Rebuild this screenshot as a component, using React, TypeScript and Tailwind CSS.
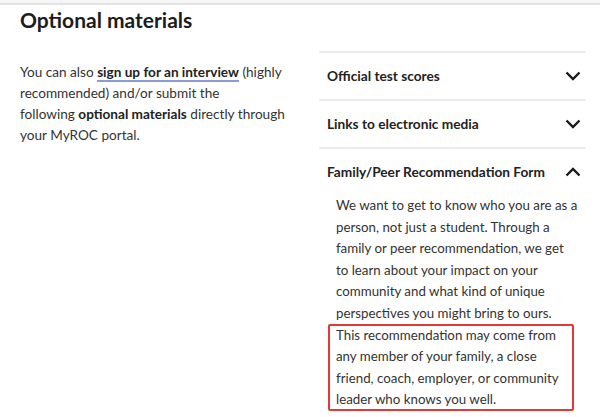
import React from "react";

const font = { fontFamily: "Lato, 'Open Sans', Arial, sans-serif" };

function Chevron({ up }: { up?: boolean }) {
  return (
    <svg width="16" height="10" viewBox="0 0 16 10" aria-hidden className="shrink-0">
      <polyline
        points={up ? "1.5,8.5 8,2 14.5,8.5" : "1.5,1.5 8,8 14.5,1.5"}
        fill="none"
        stroke="#1a1a1a"
        strokeWidth="2.4"
      />
    </svg>
  );
}

function AccordionHeader({ title, open }: { title: string; open?: boolean }) {
  return (
    <div className="border-t-2 border-[#ececec]">
      <button
        type="button"
        className="flex h-[46px] w-full items-center justify-between pl-2 pr-[5px] text-left text-[13.7px] font-bold text-[#222]"
      >
        <span>{title}</span>
        <Chevron up={open} />
      </button>
    </div>
  );
}

// line breaks follow the original column width
const intro = [
  "We want to get to know who you are as a",
  "person, not just a student. Through a",
  "family or peer recommendation, we get",
  "to learn about your impact on your",
  "community and what kind of unique",
  "perspectives you might bring to ours.",
];
const note = [
  "This recommendation may come from",
  "any member of your family, a close",
  "friend, coach, employer, or community",
  "leader who knows you well.",
];

export default function App() {
  return (
    <div className="min-h-[417px] w-[600px] bg-white" style={font}>
      <div className="h-[5px] border-b-2 border-[#e3e3e3] bg-[#f6f6f6]" />
      <h2 className="px-5 pt-[2px] text-[21px] font-bold leading-[26px] text-[#1c1c1c]">
        Optional materials
      </h2>

      <div className="mt-[18px] flex">
        <div className="w-[319px] shrink-0 pl-5 pr-4 pt-[11px]">
          <p className="text-[13.6px] leading-[21px] text-[#333]">
            You can also{" "}
            <a className="border-b-2 border-[#8b9bd8] font-bold text-[#222]">sign up for an interview</a>{" "}
            (highly
            <br />
            recommended) and/or submit the
            <br />
            following <strong className="font-bold text-[#222]">optional materials</strong> directly through
            <br />
            your MyROC portal.
          </p>
        </div>

        <div className="w-[267px] shrink-0">
          <AccordionHeader title="Official test scores" />
          <AccordionHeader title="Links to electronic media" />
          <AccordionHeader title="Family/Peer Recommendation Form" open />
          <div className="pl-[17px] text-[13.3px] leading-[21.6px] text-[#333]">
            <p>
              {intro.map((line) => (
                <span key={line} className="block whitespace-nowrap">
                  {line}
                </span>
              ))}
            </p>
            <p className="relative">
              {note.map((line) => (
                <span key={line} className="block whitespace-nowrap">
                  {line}
                </span>
              ))}
              <span className="pointer-events-none absolute -left-[8px] -top-[1px] bottom-0 right-[12px] rounded-[2px] border-2 border-[#e53935]" />
            </p>
          </div>
        </div>
      </div>
    </div>
  );
}
